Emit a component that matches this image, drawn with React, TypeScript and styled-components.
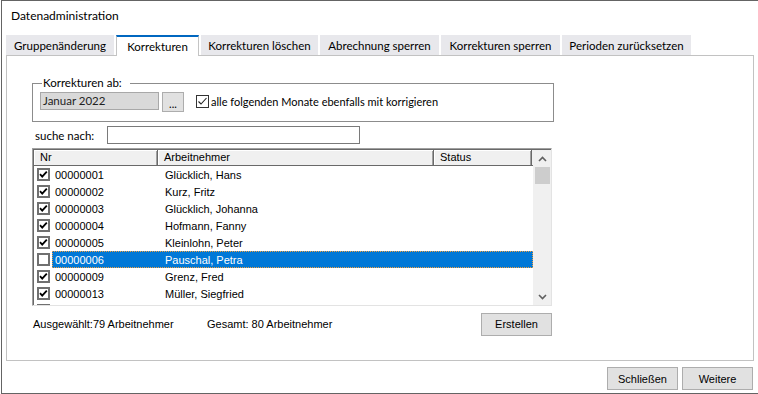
import React from "react";
import styled, { createGlobalStyle } from "styled-components";

const GlobalStyle = createGlobalStyle`
  html, body {
    margin: 0;
    padding: 0;
    background: #ffffff;
  }
  * {
    box-sizing: border-box;
  }
`;

interface IRow {
  nr: string;
  name: string;
  checked: boolean;
  selected?: boolean;
}

const rows: IRow[] = [
  { nr: "00000001", name: "Glücklich, Hans", checked: true },
  { nr: "00000002", name: "Kurz, Fritz", checked: true },
  { nr: "00000003", name: "Glücklich, Johanna", checked: true },
  { nr: "00000004", name: "Hofmann, Fanny", checked: true },
  { nr: "00000005", name: "Kleinlohn, Peter", checked: true },
  { nr: "00000006", name: "Pauschal, Petra", checked: false, selected: true },
  { nr: "00000009", name: "Grenz, Fred", checked: true },
  { nr: "00000013", name: "Müller, Siegfried", checked: true },
  { nr: "", name: "", checked: true },
];

const tabs = [
  { label: "Gruppenänderung", width: 108 },
  { label: "Korrekturen", width: 83 },
  { label: "Korrekturen löschen", width: 117 },
  { label: "Abrechnung sperren", width: 119 },
  { label: "Korrekturen sperren", width: 119 },
  { label: "Perioden zurücksetzen", width: 129 },
];

const ListCheck = ({ checked }: { checked: boolean }): JSX.Element => (
  <svg width="13" height="13" viewBox="0 0 13 13">
    <rect x="1" y="1" width="11" height="11" fill="#ffffff" stroke="#707070" strokeWidth="2" />
    {checked && (
      <path d="M3 6.2 L5.2 8.6 L9.8 3.6" fill="none" stroke="#000000" strokeWidth="1.8" />
    )}
  </svg>
);

const ModernCheck = (): JSX.Element => (
  <svg width="13" height="13" viewBox="0 0 13 13">
    <rect x="0.5" y="0.5" width="12" height="12" fill="#ffffff" stroke="#333333" strokeWidth="1" />
    <path d="M2.5 6.5 L5 9 L10.5 3" fill="none" stroke="#222222" strokeWidth="1.1" />
  </svg>
);

const Chevron = ({ up }: { up?: boolean }): JSX.Element => (
  <svg width="9" height="6" viewBox="0 0 9 6">
    <path
      d={up ? "M1 5 L4.5 1.5 L8 5" : "M1 1 L4.5 4.5 L8 1"}
      fill="none"
      stroke="#606060"
      strokeWidth="1.6"
    />
  </svg>
);

const App = (): JSX.Element => (
  <Window>
    <GlobalStyle />
    <Title>Datenadministration</Title>
    <TabBar>
      {tabs.map((t, i) => (
        <Tab key={t.label} active={i === 1} style={{ width: t.width }}>
          {t.label}
        </Tab>
      ))}
    </TabBar>
    <Panel>
      <GroupBox>
        <Legend>Korrekturen ab:</Legend>
        <GroupRow>
          <DisabledInput>Januar 2022</DisabledInput>
          <DotsButton>...</DotsButton>
          <CheckLabel>
            <ModernCheck />
            <span>alle folgenden Monate ebenfalls mit korrigieren</span>
          </CheckLabel>
        </GroupRow>
      </GroupBox>
      <SearchRow>
        <SearchLabel>suche nach:</SearchLabel>
        <SearchInput />
      </SearchRow>
      <ListView>
        <ListBody>
          <HeaderRow>
            <HeaderCell width={124}>Nr</HeaderCell>
            <HeaderCell width={276}>Arbeitnehmer</HeaderCell>
            <HeaderCell width={98}>Status</HeaderCell>
          </HeaderRow>
          <Rows>
            {rows.map((r, i) => (
              <Row key={i}>
                <CheckCell>
                  <ListCheck checked={r.checked} />
                </CheckCell>
                <RowContent selected={r.selected}>
                  <NrCell>{r.nr}</NrCell>
                  <NameCell>{r.name}</NameCell>
                </RowContent>
              </Row>
            ))}
          </Rows>
        </ListBody>
        <ScrollBar>
          <ScrollArrow>
            <Chevron up />
          </ScrollArrow>
          <Thumb />
          <ScrollTrack />
          <ScrollArrow>
            <Chevron />
          </ScrollArrow>
        </ScrollBar>
      </ListView>
      <FooterRow>
        <Count width={174}>Ausgewählt:79 Arbeitnehmer</Count>
        <Count width={275}>Gesamt: 80 Arbeitnehmer</Count>
        <Button>Erstellen</Button>
      </FooterRow>
    </Panel>
    <BottomBar>
      <Button>Schließen</Button>
      <Button>Weitere</Button>
    </BottomBar>
  </Window>
);

const Window = styled.div`
  width: 758px;
  height: 394px;
  border: 1px solid #646464;
  border-right: none;
  margin-left: 1px;
  display: flex;
  flex-direction: column;
  background: #ffffff;
  font-family: "Lato", "Noto Sans", sans-serif;
  font-size: 11px;
  color: #000000;
  overflow: hidden;
`;

const Title = styled.div`
  height: 34px;
  padding: 7px 0 0 9px;
  font-size: 12px;
`;

const TabBar = styled.div`
  display: flex;
  gap: 2px;
  height: 20px;
  margin-left: 4px;
`;

const Tab = styled.div<{ active?: boolean }>`
  display: flex;
  align-items: center;
  justify-content: center;
  background: ${(p) => (p.active ? "#ffffff" : "#e8e8ec")};
  border-top: ${(p) => (p.active ? "2px solid #0067c0" : "none")};
  border-left: ${(p) => (p.active ? "1px solid #c4c4c4" : "none")};
  border-right: ${(p) => (p.active ? "1px solid #c4c4c4" : "none")};
  position: relative;
  z-index: ${(p) => (p.active ? 2 : 0)};
  margin-bottom: ${(p) => (p.active ? "-1px" : "0")};
  height: ${(p) => (p.active ? "21px" : "20px")};
  padding-top: ${(p) => (p.active ? "0" : "1px")};
  white-space: nowrap;
  font-size: 11.5px;
`;

const Panel = styled.div`
  width: 748px;
  height: 306px;
  margin-left: 4px;
  border: 1px solid #c2c2c2;
  padding: 20px 0 0 25px;
  display: flex;
  flex-direction: column;
  position: relative;
  z-index: 1;
`;

const GroupBox = styled.fieldset`
  margin: 0;
  width: 522px;
  height: 46px;
  border: 1px solid #8c8c8c;
  padding: 0 0 0 7px;
`;

const Legend = styled.legend`
  padding: 0 8px 0 1px;
  margin-left: 2px;
  line-height: 14px;
  font-size: 11.5px;
`;

const GroupRow = styled.div`
  display: flex;
  align-items: center;
`;

const DisabledInput = styled.div`
  width: 119px;
  height: 18px;
  background: #d9d9d9;
  border: 1px solid #a8a8a8;
  padding: 0 0 0 2px;
  line-height: 16px;
  color: #222222;
  font-size: 11.5px;
`;

const DotsButton = styled.div`
  width: 22px;
  height: 20px;
  margin-left: 3px;
  margin-top: 2px;
  background: #e1e1e1;
  border: 1px solid #adadad;
  display: flex;
  align-items: flex-end;
  justify-content: center;
  line-height: 15px;
`;

const CheckLabel = styled.label`
  display: flex;
  align-items: center;
  gap: 2px;
  margin-left: 12px;
  margin-top: 1px;

  svg {
    flex-shrink: 0;
  }
`;

const SearchRow = styled.div`
  display: flex;
  align-items: center;
  margin-top: 4px;
  height: 18px;
`;

const SearchLabel = styled.div`
  width: 75px;
  padding-left: 3px;
  font-size: 11.5px;
`;

const SearchInput = styled.div`
  width: 253px;
  height: 18px;
  border: 1px solid #7a7a7a;
  background: #ffffff;
`;

const ListView = styled.div`
  display: flex;
  width: 520px;
  height: 158px;
  margin-top: 4px;
  border-top: 1px solid #a0a0a0;
  border-left: 1px solid #a0a0a0;
  border-bottom: 1px solid #e3e3e3;
  border-right: 1px solid #e3e3e3;
  box-shadow: inset 1px 1px 0 #696969;
  padding: 1px 0 0 1px;
  overflow: hidden;
  font-family: "Liberation Sans", Arial, sans-serif;
  font-size: 11px;
`;

const ListBody = styled.div`
  flex: 1;
  display: flex;
  flex-direction: column;
  overflow: hidden;
`;

const HeaderRow = styled.div`
  display: flex;
  height: 17px;
  background: #f0f0f0;
  border-bottom: 1px solid #696969;
`;

const HeaderCell = styled.div<{ width: number }>`
  width: ${(p) => p.width}px;
  padding-left: 6px;
  line-height: 15px;
  border-right: 1px solid #696969;
  box-shadow: inset 1px 1px 0 #ffffff, inset -1px 0 0 #a0a0a0;
  color: #000000;
`;

const Rows = styled.div`
  display: flex;
  flex-direction: column;
`;

const Row = styled.div`
  display: flex;
  height: 17px;
  align-items: center;
`;

const CheckCell = styled.div`
  width: 18px;
  padding-left: 3px;
  display: flex;
  align-items: center;
`;

const RowContent = styled.div<{ selected?: boolean }>`
  display: flex;
  flex: 1;
  height: 17px;
  align-items: center;
  background: ${(p) => (p.selected ? "#0078d7" : "transparent")};
  color: ${(p) => (p.selected ? "#ffffff" : "#000000")};
  outline: ${(p) => (p.selected ? "1px dotted #f0a040" : "none")};
  outline-offset: -1px;
`;

const NrCell = styled.div`
  width: 106px;
  padding-left: 3px;
`;

const NameCell = styled.div`
  flex: 1;
  padding-left: 7px;
`;

const ScrollBar = styled.div`
  width: 18px;
  background: #f0f0f0;
  display: flex;
  flex-direction: column;
  align-items: center;
`;

const ScrollArrow = styled.div`
  height: 17px;
  display: flex;
  align-items: center;
  justify-content: center;
`;

const Thumb = styled.div`
  width: 15px;
  height: 17px;
  background: #cdcdcd;
`;

const ScrollTrack = styled.div`
  flex: 1;
`;

const FooterRow = styled.div`
  display: flex;
  align-items: center;
  margin-top: 7px;
  height: 22px;
`;

const Count = styled.div<{ width: number }>`
  width: ${(p) => p.width}px;
  padding-left: 1px;
  font-family: "Liberation Sans", Arial, sans-serif;
  font-size: 11px;
`;

const Button = styled.div`
  width: 71px;
  height: 23px;
  background: #e1e1e1;
  border: 1px solid #adadad;
  display: flex;
  align-items: center;
  justify-content: center;
  font-family: "Liberation Sans", Arial, sans-serif;
  font-size: 11px;
`;

const BottomBar = styled.div`
  display: flex;
  justify-content: flex-end;
  gap: 4px;
  padding: 6px 6px 0 0;
`;

export default App;
